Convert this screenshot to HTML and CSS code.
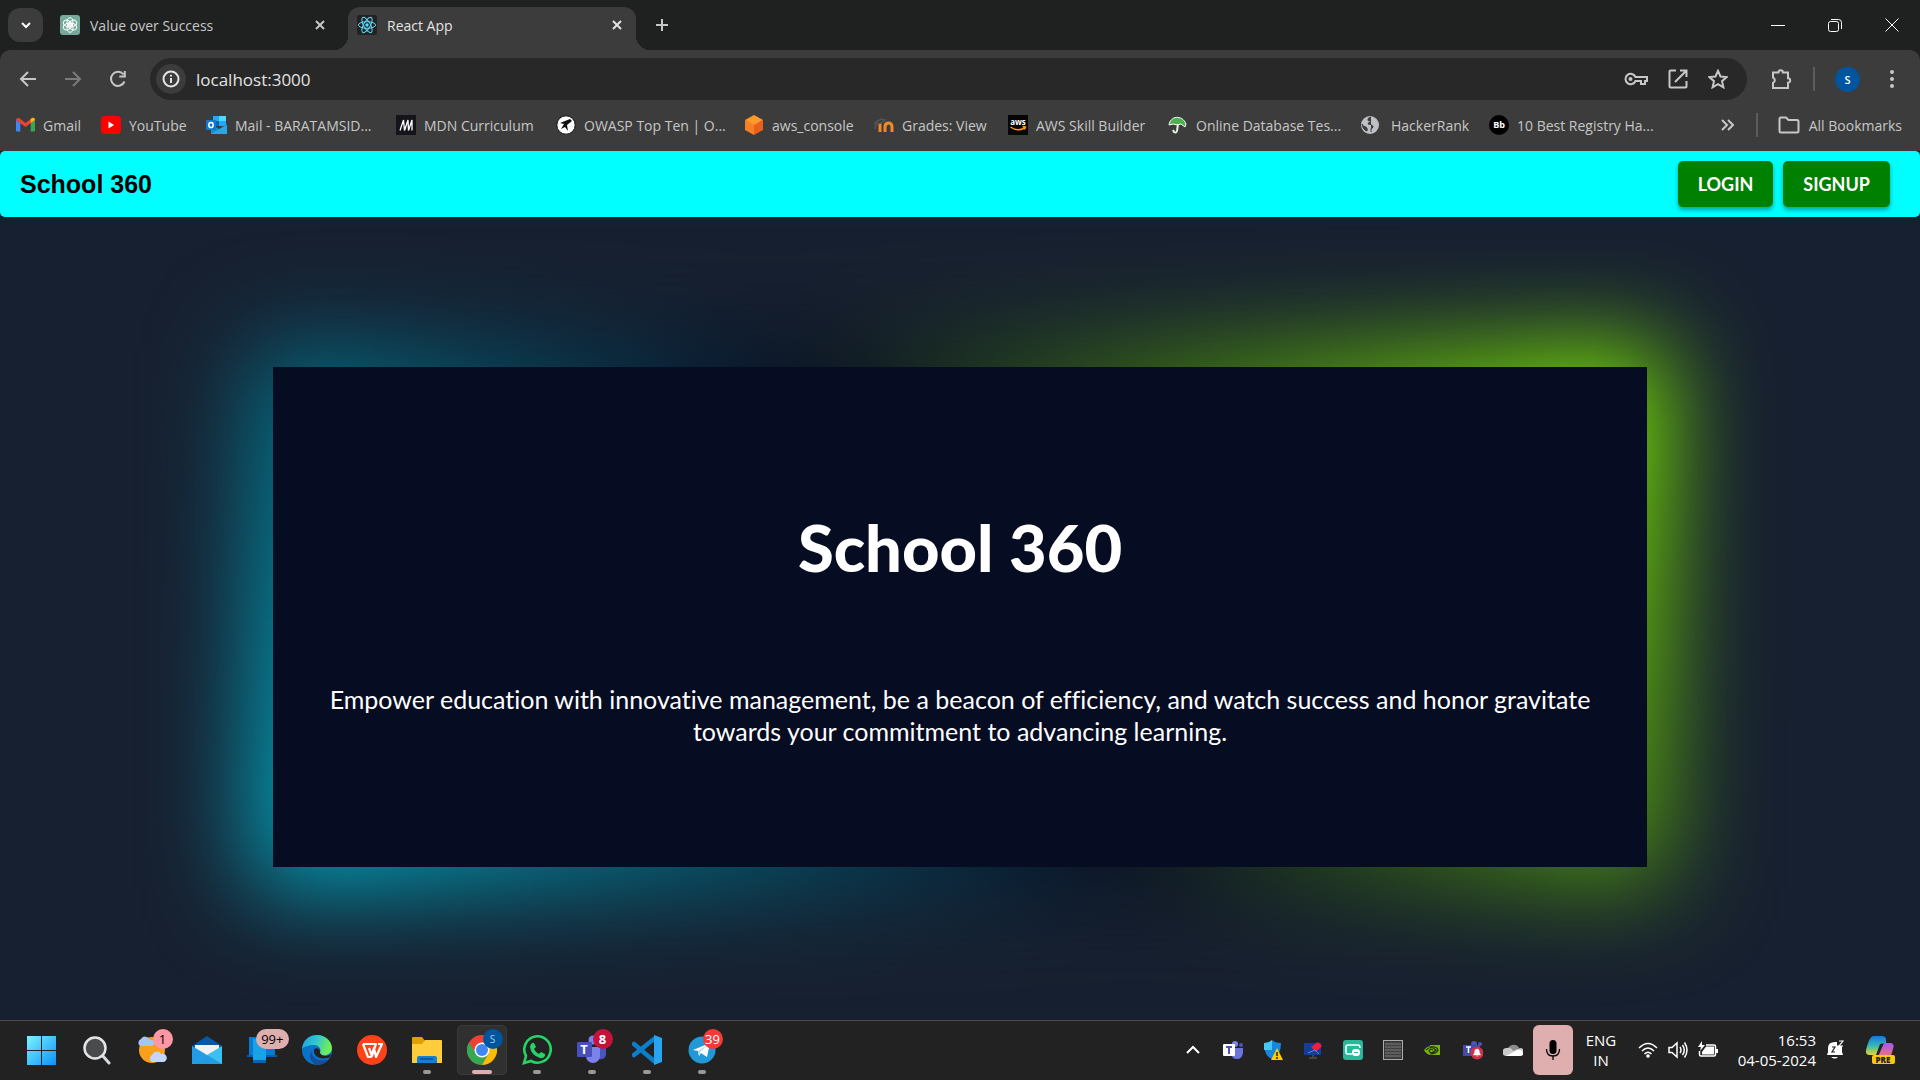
FILE: index.html
```html
<!DOCTYPE html>
<html lang="en">
<head>
<meta charset="utf-8">
<title>React App</title>
<link rel="stylesheet" href="styles.css">
</head>
<body>
<header class="browser">
  <div class="tabstrip">
    <button class="tab-search" aria-label="Search tabs"><svg width="12" height="12" viewBox="0 0 12 12"><path class="line" d="M2 4l4 4 4-4"/></svg></button>
    <div class="tab">
      <svg width="20" height="20" viewBox="0 0 20 20"><rect width="20" height="20" rx="3" fill="#75a99c"/><g fill="none" stroke="#fff" stroke-width="1"><ellipse cx="10" cy="7" rx="3" ry="4.200"/><ellipse cx="10" cy="7" rx="3" ry="4.200" transform="rotate(60 10 10)"/><ellipse cx="10" cy="7" rx="3" ry="4.200" transform="rotate(120 10 10)"/><ellipse cx="10" cy="7" rx="3" ry="4.200" transform="rotate(180 10 10)"/><ellipse cx="10" cy="7" rx="3" ry="4.200" transform="rotate(240 10 10)"/><ellipse cx="10" cy="7" rx="3" ry="4.200" transform="rotate(300 10 10)"/></g></svg>
      <span class="tab-title">Value over Success</span>
      <button class="close" aria-label="Close tab"><svg width="12" height="12" viewBox="0 0 12 12"><path class="line" d="M2 2l8 8M10 2l-8 8"/></svg></button>
    </div>
    <div class="tab active">
      <svg width="20" height="20" viewBox="0 0 20 20"><rect width="20" height="20" rx="2" fill="#222"/><g fill="none" stroke="#61dafb" stroke-width="1"><ellipse cx="10" cy="10" rx="8.6" ry="3.3"/><ellipse cx="10" cy="10" rx="8.6" ry="3.3" transform="rotate(60 10 10)"/><ellipse cx="10" cy="10" rx="8.6" ry="3.3" transform="rotate(120 10 10)"/></g><circle cx="10" cy="10" r="1.7" fill="#61dafb"/></svg>
      <span class="tab-title">React App</span>
      <button class="close" aria-label="Close tab"><svg width="12" height="12" viewBox="0 0 12 12"><path class="line" d="M2 2l8 8M10 2l-8 8"/></svg></button>
    </div>
    <button class="new-tab" aria-label="New tab"><svg width="14" height="14" viewBox="0 0 14 14"><path class="line" d="M7 1v12M1 7h12"/></svg></button>
    <div class="window-buttons">
      <button aria-label="Minimize"><svg width="14" height="14" viewBox="0 0 14 14"><path class="hair" d="M0 7.5h14"/></svg></button>
      <button aria-label="Restore"><svg width="14" height="14" viewBox="0 0 14 14"><rect class="hair" x=".5" y="3.5" width="10" height="10" rx="2"/><path class="hair" d="M3 1.500h7.500a3 3 0 0 1 3 3V11"/></svg></button>
      <button aria-label="Close window"><svg width="14" height="14" viewBox="0 0 14 14"><path class="hair" d="M.5.5l13 13M13.500.5l-13 13"/></svg></button>
    </div>
  </div>

  <div class="toolbar">
    <button aria-label="Back"><svg width="20" height="20" viewBox="0 0 20 20"><path class="line" d="M18 10H3M10 3l-7 7 7 7"/></svg></button>
    <button class="dim" aria-label="Forward"><svg width="20" height="20" viewBox="0 0 20 20"><path class="line" d="M2 10h15M10 3l7 7-7 7"/></svg></button>
    <button aria-label="Reload"><svg width="20" height="20" viewBox="0 0 20 20"><path class="line" d="M16.500 12.500A7 7 0 1 1 15.500 5.500M16.800 2v5.500h-5.500"/></svg></button>
    <div class="omnibox">
      <button class="site-info" aria-label="Site information"><svg width="18" height="18" viewBox="0 0 18 18"><circle class="line" cx="9" cy="9" r="7.500"/><path class="line" d="M9 8v5M9 4.800v1.800"/></svg></button>
      <input class="url" aria-label="Address" value="localhost:3000">
      <button aria-label="Passwords"><svg width="24" height="16" viewBox="0 0 24 16"><path class="line" d="M11.500 6H23v4h-2v3h-4v-3h-5.500A5.200 5.200 0 1 1 11.500 6z"/><circle cx="6.500" cy="8" r="2" fill="currentColor"/></svg></button>
      <button aria-label="Open in app"><svg width="20" height="20" viewBox="0 0 20 20"><path class="line" d="M8 1.500H2.500a1 1 0 0 0-1 1v15a1 1 0 0 0 1 1h15a1 1 0 0 0 1-1V12M12 1.500h6.500V8M18 2L7 13"/></svg></button>
      <button aria-label="Bookmark this page"><svg width="20" height="20" viewBox="0 0 20 20"><path class="line" d="M10 1.800l2.500 5.700 6.100.6-4.600 4.100 1.400 6.100L10 15.100l-5.400 3.200L6 12.200 1.400 8.100l6.100-.6z"/></svg></button>
    </div>
    <button class="ext" aria-label="Extensions"><svg width="22" height="22" viewBox="0 0 22 22"><path class="line" d="M2 4.500h5.500a2.200 2.200 0 0 1 4.400 0H17v5.800a2.200 2.200 0 0 1 0 4.400V20H2v-5a3 3 0 0 0 0-5.500z"/></svg></button>
    <span class="divider"></span>
    <button class="avatar" aria-label="Profile">S</button>
    <button class="menu" aria-label="Menu"><svg width="6" height="20" viewBox="0 0 6 20" fill="currentColor"><circle cx="3" cy="3" r="2"/><circle cx="3" cy="10" r="2"/><circle cx="3" cy="17" r="2"/></svg></button>
  </div>

  <div class="bookmarks">
    <nav class="bookmark-list" aria-label="Bookmarks">
      <a href="#"><svg width="19" height="20" viewBox="0 0 19 20"><path d="M0 5v10.500q0 1 1 1h3.300V8z" fill="#4285f4"/><path d="M19 5v10.500q0 1-1 1h-3.300V8z" fill="#34a853"/><path d="M0 5l9.500 7L19 5l-3-1.900-6.500 4.800L3 3.100Q.500 2.600 0 5z" fill="#ea4335"/><path d="M14.700 4.100L16 3.100c1.400-.8 3 .2 3 2l-4.300 3z" fill="#fbbc04"/></svg>Gmail</a>
      <a href="#"><svg width="20" height="20" viewBox="0 0 20 20"><rect y="1" width="20" height="18" rx="4" fill="#f00"/><path d="M7.500 6.500l5.500 3.500-5.500 3.500z" fill="#fff"/></svg>YouTube</a>
      <a href="#"><svg width="21" height="20" viewBox="0 0 21 20"><path d="M7 1h13v10H7z" fill="#28a8ea"/><path d="M13 1h7v5h-7z" fill="#50d9ff"/><path d="M7 6h6v5H7z" fill="#0364b8"/><path d="M5 9l8 5 8-5v10H5z" fill="#1490df"/><path d="M5 19l16-9v9z" fill="#28a8ea"/><rect y="5" width="10" height="10" rx="1" fill="#0f78d4"/><ellipse cx="5" cy="10" rx="2.200" ry="2.600" fill="none" stroke="#fff" stroke-width="1.500"/></svg>Mail - BARATAMSID...</a>
      <a href="#"><svg width="20" height="20" viewBox="0 0 20 20"><rect width="20" height="20" fill="#15141a"/><path d="M4 15.500L7.500 5l1 10.500L12 5l.5 10.500M12.500 15.500L16 5v10.500" fill="none" stroke="#fff" stroke-width="1.300"/></svg>MDN Curriculum</a>
      <a href="#"><svg width="20" height="20" viewBox="0 0 20 20"><circle cx="10" cy="10" r="9.200" fill="#fff" stroke="#111"/><path d="M4 8l10-4 2 2-5 4 1 6-3-4-4 2 3-5z" fill="#111"/></svg>OWASP Top Ten | O...</a>
      <a href="#"><svg width="20" height="20" viewBox="0 0 20 20"><path d="M10 0l9 5-9 6-9-6z" fill="#ff9a2b"/><path d="M1 5l9 5v10l-9-5z" fill="#f58025"/><path d="M19 5l-9 5v10l9-5z" fill="#e8601c"/></svg>aws_console</a>
      <a href="#"><svg width="20" height="20" viewBox="0 0 20 20"><path d="M11 17v-5q0-4 3.500-4t3.500 4v5M6 8v9" fill="none" stroke="#f08a24" stroke-width="3"/><path d="M0 8l7-4 4 1-4 3-5 1-1 5" fill="none" stroke="#555" stroke-width="1.500"/></svg>Grades: View</a>
      <a href="#"><svg width="20" height="20" viewBox="0 0 20 20"><rect width="20" height="20" fill="#050505"/><text x="10" y="10" text-anchor="middle" class="aws">aws</text><path d="M2.500 12q7 5 14 1M14.500 11.500l3 .5-1 2.500" fill="none" stroke="#f90" stroke-width="1.500"/></svg>AWS Skill Builder</a>
      <a href="#"><svg width="20" height="20" viewBox="0 0 20 20"><path d="M1 10C2 1 14-1 18 9l-1 3-4-3-4 1-4-1z" fill="#4caf50" stroke="#fff"/><path d="M10 9l-1 7q-1 2.500-3 1l-1-2" fill="none" stroke="#e5f3e5" stroke-width="2"/></svg>Online Database Tes...</a>
      <a href="#"><svg class="globe" width="20" height="20" viewBox="0 0 20 20"><circle cx="10" cy="10" r="9" fill="#bdc1c6"/><path d="M11 2q-4 1-3 3.500 3 0 3 1.500-3 0-3 2 4 0 5 2.500 0 2-2 2v3.500M2 9q1 3 4 3 2 2 1 4-4-1-5-7z" fill="#3c3c3c" stroke="#3c3c3c"/></svg>HackerRank</a>
      <a href="#"><svg width="20" height="20" viewBox="0 0 20 20"><circle cx="10" cy="10" r="10"/><text x="10" y="13" text-anchor="middle" class="bb">Bb</text></svg>10 Best Registry Ha...</a>
    </nav>
    <button class="more" aria-label="More bookmarks"><svg width="14" height="12" viewBox="0 0 14 12"><path class="line" d="M2 1l5 5-5 5M8 1l5 5-5 5"/></svg></button>
    <span class="divider"></span>
    <a class="all" href="#"><svg width="22" height="18" viewBox="0 0 22 18"><path class="line" d="M1.500 3q0-1.500 1.500-1.500h5L10.500 4H19q1.500 0 1.500 1.500V15q0 1.500-1.500 1.500H3Q1.500 16.500 1.500 15z"/></svg>All Bookmarks</a>
  </div>
</header>

<div class="page">
  <nav class="site-nav">
    <a class="brand" href="#">School 360</a>
    <button>LOGIN</button>
    <button>SIGNUP</button>
  </nav>
  <main class="hero">
    <section class="card">
      <h1>School 360</h1>
      <p>Empower education with innovative management, be a beacon of efficiency, and watch success and honor gravitate towards your commitment to advancing learning.</p>
    </section>
  </main>
</div>

<footer class="taskbar">
  <div class="apps">
    <button aria-label="Start"><svg width="30" height="30" viewBox="0 0 30 30"><defs><linearGradient id="win" x2="1" y2="1"><stop stop-color="#7df3ff"/><stop offset="1" stop-color="#0a92f8"/></linearGradient></defs><path d="M0 1h14v14H0zM15 1h14v14H15zM0 16h14v14H0zM15 16h14v14H15z" fill="url(#win)"/></svg></button>
    <button aria-label="Search"><svg width="30" height="30" viewBox="0 0 30 30"><path d="M20 20l7 8" stroke="#d5d8dd" stroke-width="3" stroke-linecap="round"/><circle cx="13" cy="13" r="10.500" fill="#4a4b4c" stroke="#e3e5e8" stroke-width="2.500"/></svg></button>
    <button aria-label="Weather"><svg width="30" height="30" viewBox="0 0 30 30"><circle cx="15" cy="15" r="13" fill="#f6a01c"/><path d="M3 11a4 4 0 0 1 1-7 5 5 0 0 1 9 1 3 3 0 0 1 2 6z" fill="#a9c3f5"/><path d="M15 27a4 4 0 0 1 0-7 5 5 0 0 1 9-1 4 4 0 0 1 3 8z" fill="#c2d7fb"/></svg><span class="badge pink">1</span></button>
    <button aria-label="Mail"><svg width="30" height="30" viewBox="0 0 30 30"><path d="M0 11L15 1l15 10v4H0z" fill="#0a57a4"/><path d="M3 10h24v10H3z" fill="#f2f2f2"/><path d="M0 11l30 18H0z" fill="#209de6"/><path d="M30 11L0 29h30z" fill="#3bc0f2"/><path d="M15 20l15 9H0z" fill="#229be1"/></svg></button>
    <button aria-label="Phone Link"><svg width="30" height="30" viewBox="0 0 30 30"><path d="M2 2h26v19H2z" fill="#087bd0"/><path d="M0 20h30v2H0z" fill="#0b5ca8"/><path d="M6 4h13v24H6z" fill="#1aa2e8"/><path d="M6 25h13v3H6z" fill="#0862ae"/></svg><span class="badge rose wide">99+</span></button>
    <button aria-label="Edge"><svg width="30" height="30" viewBox="0 0 30 30"><defs><linearGradient id="edge" x2="1" y2=".3"><stop stop-color="#1b9de2"/><stop offset=".5" stop-color="#2fc6cf"/><stop offset="1" stop-color="#72ee54"/></linearGradient></defs><circle cx="15" cy="15" r="15" fill="#0c72c9"/><path d="M0 14C1 5 7 0 15 0c9 0 15 7 15 13 0 8-11 9-12 5 1-2 1-7-5-8-6 0-12 2-13 4z" fill="url(#edge)"/><path d="M10 16c-1 7 7 12 17 8-3 4-7 6-12 6C8 28 6 20 10 16z" fill="#114f98"/><path d="M12 15c1-3 6-2 6 1-1 4 5 7 11 3l-1 3c-9 4-17-1-16-7z" fill="#222"/></svg></button>
    <button aria-label="WPS Office"><svg width="30" height="30" viewBox="0 0 30 30"><circle cx="15" cy="15" r="15" fill="#ff4218"/><path d="M6 9h13l-4 12-3-8M6 9l5 13h3l3-9 2 9 6-13h-4" fill="none" stroke="#fff" stroke-width="2.200" stroke-linejoin="round"/></svg></button>
    <button class="running" aria-label="File Explorer"><svg width="30" height="30" viewBox="0 0 30 30"><path d="M0 3q0-1 1-1h9l3 4-3 4H0z" fill="#e0a100"/><path d="M0 9h10l3-4h16q1 0 1 1v22H0z" fill="#ffcc3c"/><path d="M5 28v-5q0-2 2-2h16q2 0 2 2v5z" fill="#137fd6"/><path d="M8 24h13" stroke="#075090" stroke-width="1.500"/></svg></button>
    <button class="running current" aria-label="Chrome"><svg width="30" height="30" viewBox="0 0 30 30"><circle cx="15" cy="15" r="15" fill="#ea4335"/><path d="M2 7.500A15 15 0 0 0 15 30l6.500-11.300L15 15H6.500z" fill="#34a853"/><path d="M15 30A15 15 0 0 0 28 7.500H15l6.500 11.200z" fill="#fbbc04"/><circle cx="15" cy="15" r="7.500" fill="#fff"/><circle cx="15" cy="15" r="6" fill="#4285f4"/></svg><span class="badge blue">S</span></button>
    <button class="running" aria-label="WhatsApp"><svg width="30" height="30" viewBox="0 0 30 30"><path d="M2 28l2-7A13.200 13.200 0 1 1 9 26z" fill="none" stroke="#25d366" stroke-width="2.600"/><path d="M10 8l2 0 2 4-2 2q2 4 5 5l2-2 4 2v2q-2 3-5 2Q9 20 8 12q0-2 2-4z" fill="#25d366"/></svg></button>
    <button class="running" aria-label="Teams"><svg width="30" height="30" viewBox="0 0 30 30"><circle cx="16" cy="5" r="4.500" fill="#7b83eb"/><path d="M20 12h9v8q-1 5-7 4z" fill="#4b53bc"/><path d="M9 12h14v9a7 7 0 0 1-14 0z" fill="#7b83eb"/><rect y="7" width="15" height="15" rx="1" fill="#474fb8"/><text x="7" y="19" text-anchor="middle" class="tlogo">T</text></svg><span class="badge crimson">8</span></button>
    <button class="running" aria-label="Visual Studio Code"><svg width="30" height="30" viewBox="0 0 30 30"><path d="M2 9l20 17M2 20L22 4" stroke="#0a7fcc" stroke-width="4.500" stroke-linecap="round"/><path d="M22 0l8 3v24l-8 3z" fill="#27a5f0"/><path d="M22 8l-9 7 9 7z" fill="#222"/></svg></button>
    <button class="running" aria-label="Telegram"><svg width="30" height="30" viewBox="0 0 30 30"><circle cx="15" cy="15" r="13.500" fill="#2398d6"/><path d="M6 15l17-7-3 14-6-4-2 3-1-5z" fill="#fff"/><path d="M11 16l9-6-7 7-1 4z" fill="#b5d5e9"/></svg><span class="badge red">39</span></button>
  </div>

  <div class="tray">
    <button aria-label="Show hidden icons"><svg width="16" height="10" viewBox="0 0 16 10"><path class="line" d="M2 8l6-6 6 6"/></svg></button>
    <button aria-label="Teams"><svg width="20" height="20" viewBox="0 0 20 20"><circle cx="12" cy="4" r="3" fill="#7b83eb"/><circle cx="18" cy="5" r="2" fill="#4b53bc"/><path d="M8 8h12v5q-1 6-6 6t-6-5z" fill="#6b73dd"/><rect y="4" width="12" height="12" rx="1" fill="#fff"/><path d="M3 7h6M6 7v7" stroke="#4b53bc" stroke-width="2"/></svg></button>
    <button aria-label="Windows Security"><svg width="20" height="20" viewBox="0 0 20 20"><path d="M1 3q5 0 8-3 3 3 9 3 0 13-9 16Q1 16 1 3z" fill="#1688dc"/><path d="M1 3q5 0 8-3v10H1z" fill="#46c7f5"/><path d="M14 8l6 12H8z" fill="#fc0"/><path d="M14 12v4M14 17v2" stroke="#222" stroke-width="1.500"/></svg></button>
    <button aria-label="Display"><svg width="20" height="20" viewBox="0 0 20 20"><path d="M1 3h17v12H1z" fill="#143c9c"/><path d="M6 18h8M10 15v3" stroke="#444" stroke-width="2"/><path d="M8 7l7-5 4 4-6 6z" fill="#f51c42"/><path d="M5 13l7-3 4 4" fill="none" stroke="#379bd5"/></svg></button>
    <button aria-label="Screen capture"><svg width="20" height="20" viewBox="0 0 20 20"><rect width="20" height="20" rx="3" fill="#27b999"/><path d="M9 14H5q-2 0-2-2V7q0-2 2-2h10q2 0 2 3" fill="none" stroke="#fff" stroke-width="1.600"/><rect x="9" y="9" width="8" height="7" rx="3" fill="#fff"/><path d="M11 12.500h4" stroke="#27b999"/></svg></button>
    <button aria-label="Memory"><svg width="20" height="20" viewBox="0 0 20 20"><rect x=".5" y=".5" width="19" height="19" fill="#383838" stroke="#aaa"/><path d="M2 4h16M2 7h16M2 10h16M2 13h16M2 16h16" stroke="#888"/><path d="M4 2v16M8 2v16M12 2v16M16 2v16" stroke="#555"/></svg></button>
    <button aria-label="NVIDIA"><svg width="20" height="20" viewBox="0 0 20 20"><path d="M7 5h10v10H7q-4-1-6-5 2-3 6-4z" fill="#76b900"/><path d="M3 10q5-5 10 0-5 5-7 1 1-3 4-1M7 7q7-1 8 3-2 4-8 4" fill="none" stroke="#222" stroke-width="1.100"/></svg></button>
    <button aria-label="Teams notifications"><svg width="20" height="20" viewBox="0 0 20 20"><circle cx="11" cy="4" r="3" fill="#4b53bc"/><circle cx="17" cy="4" r="2" fill="#4b53bc"/><rect y="5" width="17" height="11" fill="#444aa8"/><path d="M3 7h5M5.500 7v6" stroke="#fff" stroke-width="1.500"/><circle cx="14" cy="13" r="6.500" fill="#ce3347"/><path d="M10.500 15l1-2q0-4 2.500-4t2.500 4l1 2zM13 16h2" fill="#fff" stroke="#fff" stroke-width=".5"/></svg></button>
    <button aria-label="OneDrive"><svg width="20" height="14" viewBox="0 0 20 14"><path d="M5 6a6 6 0 0 1 11-1l-6 5z" fill="#8d8d8d"/><path d="M3 13a4 4 0 0 1 1-8q4-1 6 3l7-3a4 4 0 0 1 0 8z" fill="#c9c9c9"/><path d="M3 13l11-6q5-1 6 3 0 3-4 3z" fill="#fff"/></svg></button>
  </div>
  <button class="mic" aria-label="Microphone in use"><svg width="16" height="20" viewBox="0 0 16 20"><rect x="4.500" width="7" height="14" rx="3.500"/><path d="M1.500 9q0 7 6.500 7t6.500-7M8 16v4" fill="none" stroke="#000" stroke-width="1.300"/></svg></button>
  <button class="lang">ENG<br>IN</button>
  <button class="quick" aria-label="Network, sound and battery">
    <svg width="20" height="20" viewBox="0 0 20 20"><path class="thin" d="M1 8q9-9 18 0M4 11q6-6 12 0M6.500 14q3.500-3.500 7 0"/><circle cx="10" cy="16" r="1.800" fill="#fff"/></svg>
    <svg width="20" height="20" viewBox="0 0 20 20"><path class="thin" d="M1 7.500h3l5-4.500v14l-5-4.500H1zM12 7q2 3 0 6M14.500 5q3.500 5 0 10M16.500 2.500q5 7.500 0 15"/></svg>
    <svg width="20" height="20" viewBox="0 0 20 20"><path class="thin" d="M8 5h8q1.500 0 1.500 1.500v8q0 1.500-1.500 1.500H3q-1.500 0-1.500-1.500V11"/><path d="M8 6.500h8v8H4V12zM18 9h2v4h-2zM4 1L0 7h3l-1 4 5-6H4z" fill="#fff"/></svg>
  </button>
  <button class="clock">16:53<br>04-05-2024</button>
  <button class="bell" aria-label="Notifications"><svg width="18" height="20" viewBox="0 0 18 20"><path d="M1 15l1-3V8q0-6 7-6h2v4h5v6l1 3z" fill="#fff"/><path d="M5 17h7q-3 3-7 0z" fill="#fff"/><path d="M6 7h3l-3 5h3" fill="none" stroke="#222" stroke-width="1.200"/><path d="M10 6h2l-2 4h3M13 1h4l-4 5h4" fill="none" stroke="#fff" stroke-width="1.200"/></svg></button>
  <button class="copilot" aria-label="Copilot"><svg width="30" height="30" viewBox="0 0 30 30"><defs><linearGradient id="cpa" x2="0" y2="1"><stop stop-color="#1876e2"/><stop offset=".5" stop-color="#32b8b4"/><stop offset="1" stop-color="#e9d52b"/></linearGradient><linearGradient id="cpb" x2="0" y2="1"><stop stop-color="#a357ef"/><stop offset="1" stop-color="#ff7a67"/></linearGradient></defs><path d="M8 1h10q4 1 3 7l-6 1-4 11H5q-5 0-4-5Q4 2 8 1z" fill="url(#cpa)"/><path d="M19 8h7q4 1 2 6l-3 10H12z" fill="url(#cpb)"/><rect x="7" y="20" width="23" height="9" rx="2" fill="#fdc70c"/><text x="18" y="28" text-anchor="middle" class="pre">PRE</text></svg></button>
</footer>
</body>
</html>
```
FILE: styles.css
```css
* { box-sizing: border-box; }

body {
  margin: 0;
  min-height: 100vh;
  display: flex;
  flex-direction: column;
  background: #172030;
  font-family: "Open Sans", "Noto Sans", sans-serif;
}

button {
  border: 0;
  padding: 0;
  background: none;
  color: inherit;
  font: inherit;
  display: flex;
  align-items: center;
  justify-content: center;
}

a { color: inherit; text-decoration: none; }
svg { display: block; flex: none; }
.line { fill: none; stroke: currentColor; stroke-width: 2; }
.hair { fill: none; stroke: #fff; stroke-width: 1; }
.thin { fill: none; stroke: #fff; stroke-width: 1.5; }

/* Browser chrome */
.browser { background: #1f2120; color: #c7c7c7; }

.tabstrip {
  display: flex;
  align-items: flex-end;
  height: 50px;
  padding-left: 8px;
}
.tab-search {
  width: 35px;
  height: 34px;
  margin-bottom: 8px;
  border-radius: 12px;
  background: #3c3c3c;
  color: #fff;
}
.tab {
  display: flex;
  align-items: center;
  gap: 10px;
  width: 288px;
  height: 43px;
  padding: 0 13px 7px 9px;
  font-size: 14px;
}
.tab-search + .tab { width: 305px; padding-left: 17px; padding-right: 22px; }
.tab-title { flex: 1; }
.tab.active {
  position: relative;
  background: #3c3c3c;
  color: #e3e3e3;
  border-radius: 12px 12px 0 0;
}
.tab.active::before,
.tab.active::after {
  content: "";
  position: absolute;
  bottom: 0;
  width: 14px;
  height: 14px;
}
.tab.active::before {
  right: 100%;
  background: radial-gradient(circle at 0 0, transparent 14px, #3c3c3c 14px);
}
.tab.active::after {
  left: 100%;
  background: radial-gradient(circle at 100% 0, transparent 14px, #3c3c3c 14px);
}
.new-tab { width: 52px; height: 50px; }
.window-buttons { display: flex; margin-left: auto; }
.window-buttons button { width: 57px; height: 50px; }

.toolbar {
  display: flex;
  align-items: center;
  height: 58px;
  padding: 0 12px 0 5px;
  background: #3c3c3c;
  border-radius: 10px 10px 0 0;
}
.toolbar > button { width: 45px; height: 40px; }
.toolbar .dim { color: #7b7b7b; }
.omnibox {
  flex: 1;
  display: flex;
  align-items: center;
  gap: 20px;
  height: 42px;
  margin-left: 10px;
  padding: 0 19px 0 6px;
  border-radius: 21px;
  background: #282828;
}
.site-info {
  width: 30px;
  height: 30px;
  border-radius: 50%;
  background: #3c3c3c;
  color: #e3e3e3;
}
.url {
  flex: 1;
  min-width: 0;
  margin-left: -10px;
  padding: 0;
  border: 0;
  background: none;
  color: #e3e3e3;
  font: 17px "Open Sans", sans-serif;
}
.toolbar .ext { margin-left: 12px; }
.divider { width: 2px; height: 24px; background: #5c5c5c; }
.toolbar .divider { margin-left: 9px; }
.toolbar .avatar {
  width: 25px;
  height: 25px;
  margin: 0 16px 0 20px;
  border-radius: 50%;
  background: #00559e;
  color: #fff;
  font-size: 11px;
  font-weight: 600;
}
.toolbar .menu { width: 32px; }

.bookmarks {
  display: flex;
  align-items: center;
  height: 43px;
  padding: 0 18px 9px 16px;
  background: #3c3c3c;
  font-size: 14px;
  white-space: nowrap;
}
.bookmark-list {
  display: grid;
  grid-template-columns: 85px 105px 190px 160px 188px 130px 134px 160px 192px 129px 170px;
}
.bookmarks a { display: flex; align-items: center; gap: 8px; }
.globe { margin-right: 3px; }
.more { margin-left: auto; }
.bookmarks .divider { margin: 0 20px 0 22px; }
.bookmarks .all { gap: 9px; }
.aws { font: 700 8px "Open Sans", sans-serif; fill: #fff; }
.bb { font: 700 9px "Open Sans", sans-serif; fill: #fff; }

/* School site */
.page { flex: 1; display: flex; flex-direction: column; background: #172030; }

.site-nav {
  display: flex;
  align-items: center;
  gap: 10px;
  height: 66px;
  padding: 0 30px 0 20px;
  border-radius: 5px;
  background: #0ff;
}
.brand {
  margin-right: auto;
  color: #000;
  font: 700 25px "Liberation Sans", Arial, sans-serif;
}
.site-nav button {
  height: 46px;
  padding: 0 20px;
  border-radius: 5px;
  background: green;
  color: #fff;
  font: 700 18px Lato, sans-serif;
  box-shadow: 0 3px 4px rgba(0, 0, 0, .35);
}

.hero {
  flex: 1;
  display: flex;
  align-items: center;
  justify-content: center;
  padding-bottom: 4px;
  overflow: hidden;
}
.card {
  position: relative;
  isolation: isolate;
  display: flex;
  flex-direction: column;
  justify-content: center;
  gap: 76px;
  width: 71.6%;
  min-height: 500px;
  padding: 40px;
  color: #fff;
  font-family: Lato, sans-serif;
  font-variant-ligatures: none;
  text-align: center;
}
.card::before,
.card::after {
  content: "";
  position: absolute;
  inset: 0;
  background: #060c21;
  z-index: -1;
}
.card::before {
  inset: -20px;
  z-index: -2;
  background: linear-gradient(235deg, #89ff00, #060c21, #00bcd4);
  filter: blur(50px);
}
.card h1 { margin: 0; font-size: 65px; line-height: 120px; font-weight: 900; }
.card p { margin: 0; font-size: 25px; line-height: 32px; }

/* Windows taskbar */
.taskbar {
  display: flex;
  align-items: center;
  height: 60px;
  padding: 0 25px 2px 14px;
  border-top: 1px solid #4b4b4b;
  background: #222;
  color: #fff;
  font-size: 15px;
  line-height: 20px;
}
.apps { display: grid; grid-template-columns: repeat(13, 55px); }
.apps button {
  position: relative;
  width: 50px;
  height: 50px;
  margin: 0 auto;
  border-radius: 5px;
}
.apps .current { background: #303030; box-shadow: inset 0 0 0 1px #3a3a3a; }
.running::after {
  content: "";
  position: absolute;
  bottom: 1px;
  width: 8px;
  height: 4px;
  border-radius: 2px;
  background: #999;
}
.current::after { width: 20px; background: #dfaeae; }
.badge {
  position: absolute;
  top: 4px;
  right: 4px;
  min-width: 20px;
  height: 20px;
  padding: 0 3px;
  border-radius: 10px;
  color: #fff;
  font-size: 13px;
  line-height: 20px;
  text-align: center;
}
.pink { background: #ff97a4; color: #000; }
.rose { background: #dfaeae; color: #000; }
.wide { right: -2px; padding: 0 5px; }
.blue { background: #00559e; color: #a9cdef; font-size: 10px; }
.crimson { background: #c4123a; font-weight: 700; }
.red { background: #f23b36; padding: 0 2px; }
.tlogo { font: 700 13px "Open Sans", sans-serif; fill: #fff; }
.pre { font: 800 8px "Open Sans", sans-serif; fill: #222; }

.tray { display: grid; grid-template-columns: repeat(9, 40px); margin-left: auto; }
.tray button { height: 50px; }
.mic { width: 40px; height: 50px; border-radius: 6px; background: #dfaeae; }
.lang { width: 56px; }
.quick { gap: 10px; margin-left: 9px; }
.clock { width: 98px; justify-content: flex-end; text-align: right; }
.bell { margin-left: 10px; }
.copilot { margin-left: 21px; }
```
